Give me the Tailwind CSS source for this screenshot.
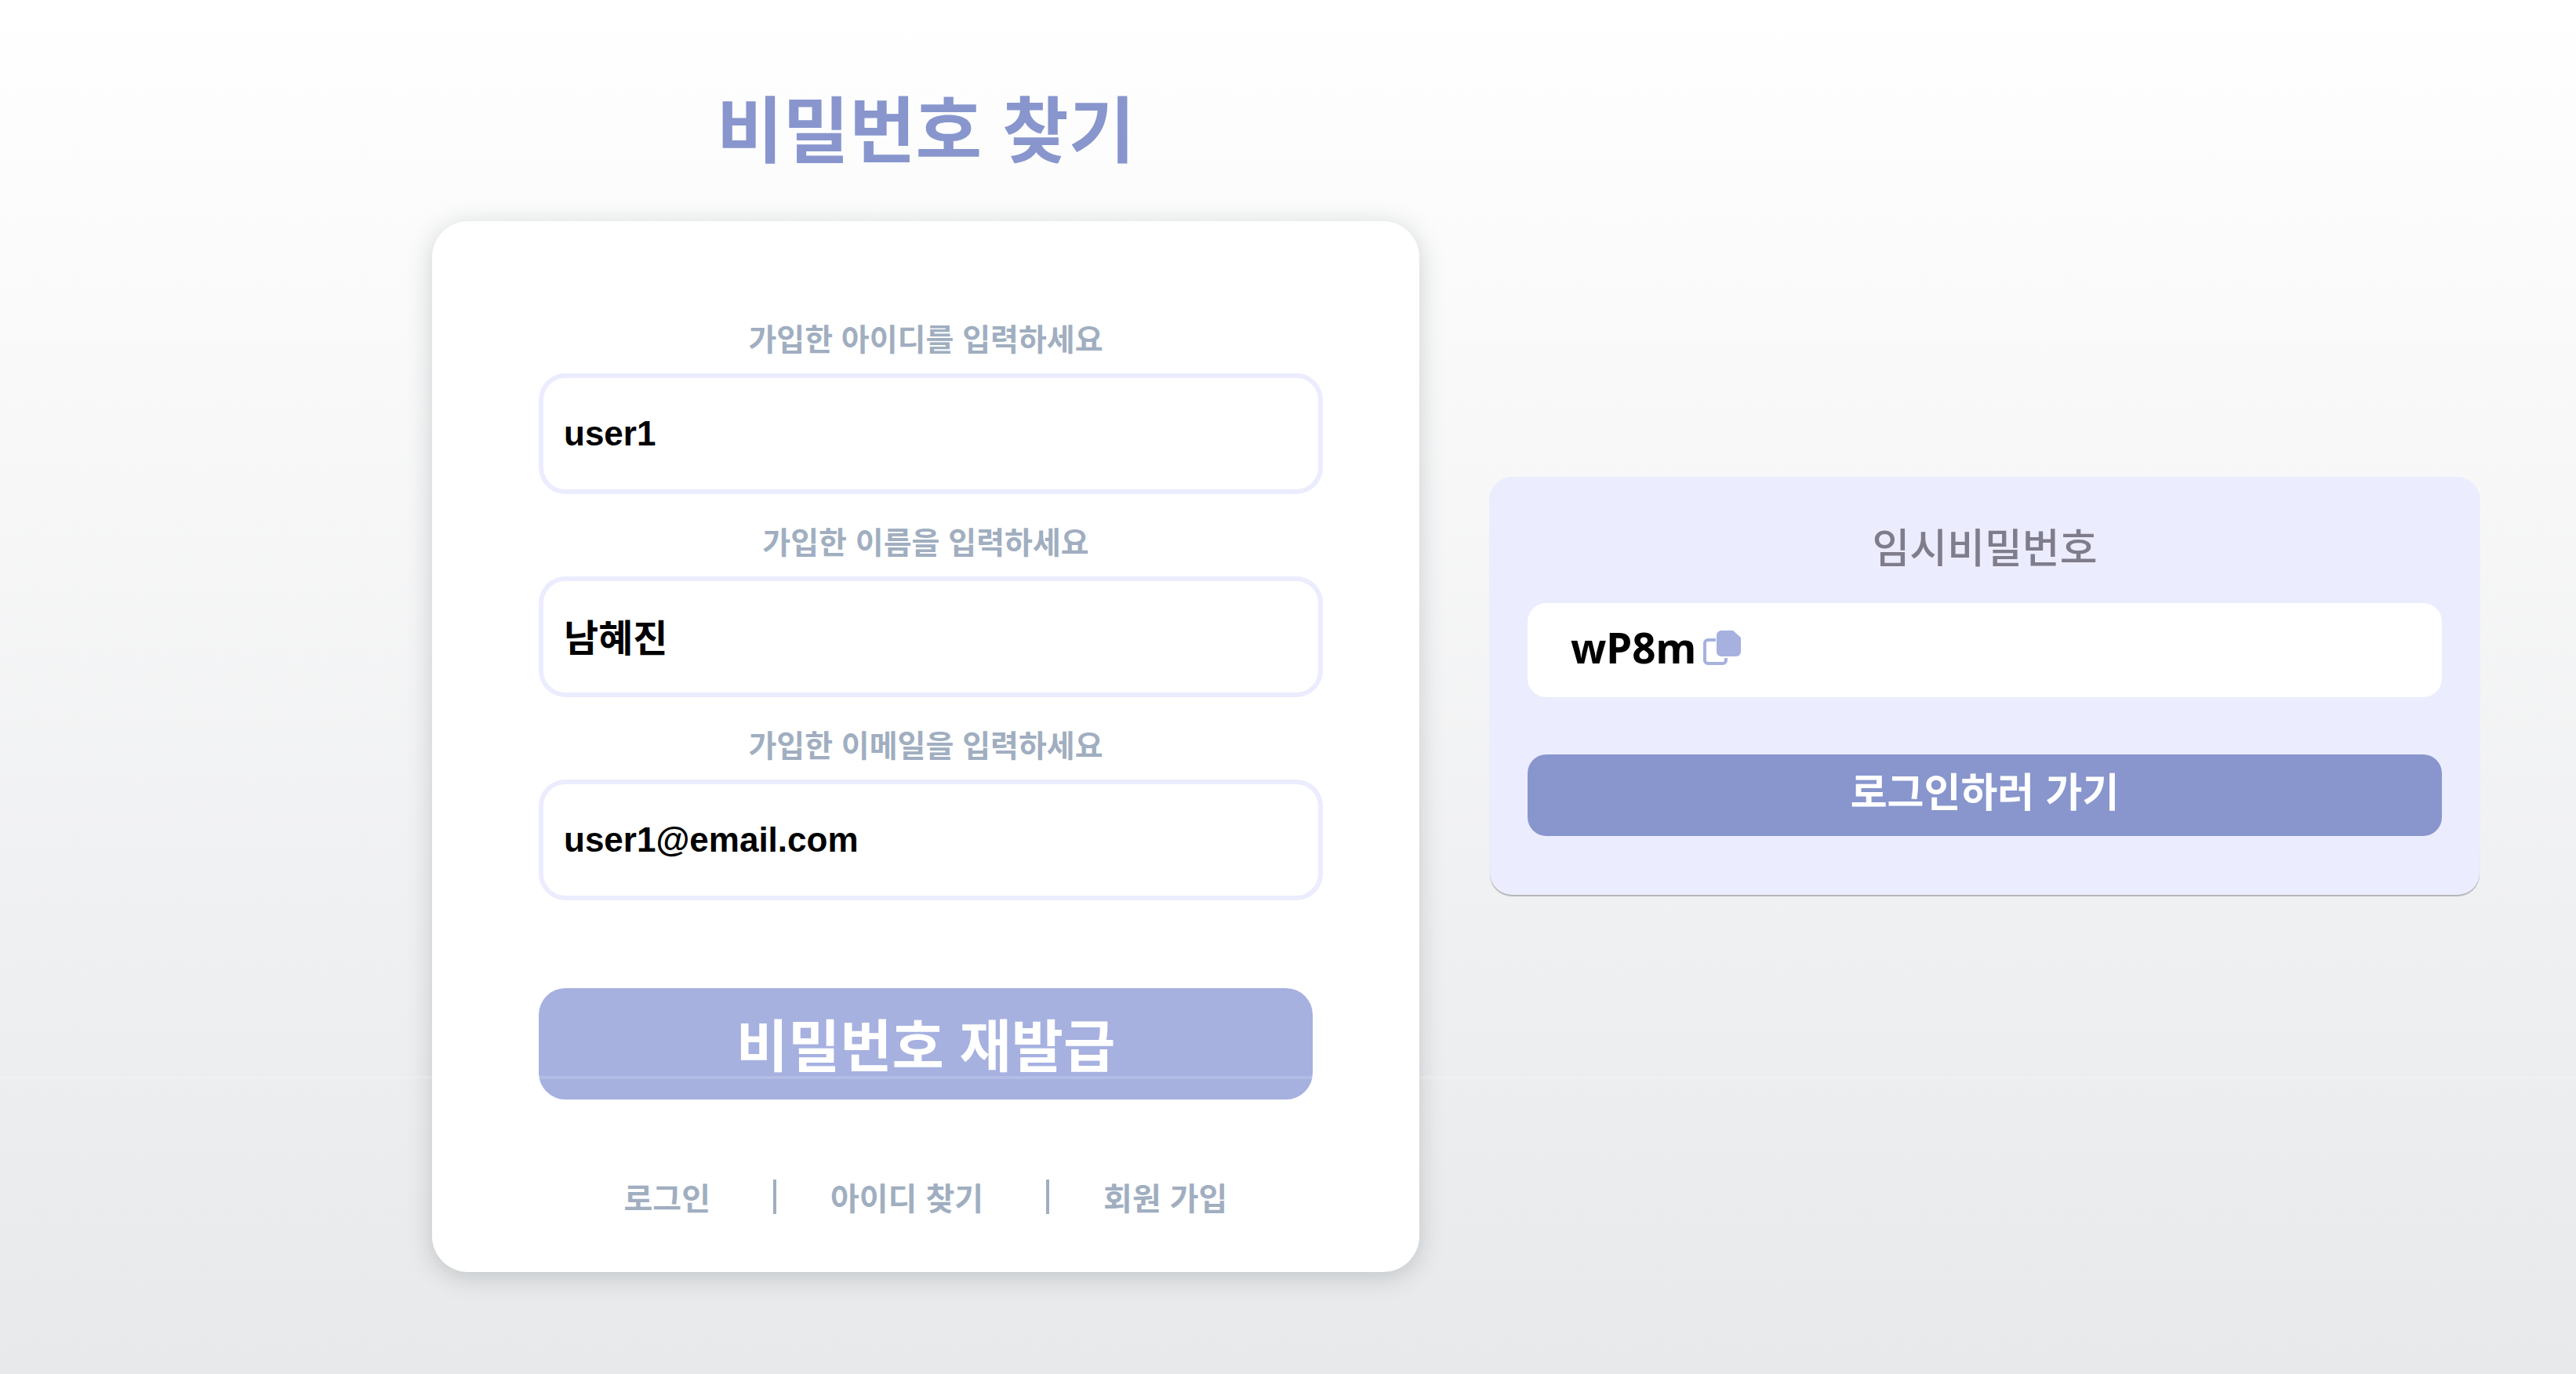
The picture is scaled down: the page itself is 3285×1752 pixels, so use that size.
<!DOCTYPE html>
<html lang="ko">
<head>
<meta charset="utf-8">
<meta name="viewport" content="width=device-width, initial-scale=1">
<title>비밀번호 찾기</title>
<script src="https://cdn.jsdelivr.net/npm/@tailwindcss/browser@4"></script>
</head>
<body class="relative min-h-screen bg-linear-to-b from-white to-[#e8e9eb] font-['Liberation_Sans','Noto_Sans_CJK_KR',sans-serif]">
<main class="grid min-h-screen grid-cols-[551fr_1259fr_90fr_1262fr_123fr]">
  <section class="col-start-2 pt-[108px] pb-[132px]">
    <h1 class="text-center font-['Noto_Sans_CJK_KR',sans-serif] text-[92px] leading-[104px] font-bold text-[#8896cd]">비밀번호 찾기</h1>
    <div class="mt-[70px] rounded-[46px] bg-white px-[136px] pt-[128px] pb-[68px] shadow-[0_6px_32px_rgba(40,60,60,0.22)]">
      <form class="flex flex-col" onsubmit="return false">
        <label for="uid" class="text-center text-[39px] leading-[48px] font-bold text-[#a0aec0]">가입한 아이디를 입력하세요</label>
        <input id="uid" type="text" value="user1" class="mt-[18px] -mr-[13px] h-[154px] rounded-[34px] border-[6px] border-[#ececff] px-[26px] text-[44px] font-bold text-black outline-none">
        <label for="uname" class="mt-[39px] text-center text-[39px] leading-[48px] font-bold text-[#a0aec0]">가입한 이름을 입력하세요</label>
        <input id="uname" type="text" value="남혜진" class="mt-[18px] -mr-[13px] h-[154px] rounded-[34px] border-[6px] border-[#ececff] px-[26px] pb-[4px] text-[48px] font-bold text-black outline-none">
        <label for="email" class="mt-[39px] text-center text-[39px] leading-[48px] font-bold text-[#a0aec0]">가입한 이메일을 입력하세요</label>
        <input id="email" type="text" value="user1@email.com" class="mt-[18px] -mr-[13px] h-[154px] rounded-[34px] border-[6px] border-[#ececff] px-[26px] text-[44px] font-bold text-black outline-none">
        <button type="submit" class="mt-[112px] h-[142px] rounded-[34px] bg-[#a6b1e0] pt-[8px] text-[72px] leading-[80px] font-bold text-white">비밀번호 재발급</button>
      </form>
      <nav class="mt-[102px] flex items-center justify-center text-[40px] leading-[48px] font-bold text-[#a0aec0]">
        <a href="#login">로그인</a>
        <span class="mr-[69px] ml-[80px] mb-[6px] h-[44px] w-[4px] bg-[#a0aec0]"></span>
        <a href="#find-id">아이디 찾기</a>
        <span class="mr-[69px] ml-[80px] mb-[6px] h-[44px] w-[4px] bg-[#a0aec0]"></span>
        <a href="#join">회원 가입</a>
      </nav>
    </div>
  </section>
  <section class="col-start-4 mt-[608px] self-start rounded-[28px] bg-[#ececff] px-[48px] pt-[52px] pb-[75px] shadow-[0_2px_1px_rgba(0,0,0,0.25)]">
    <h2 class="text-center font-['Noto_Sans_CJK_KR',sans-serif] text-[52px] leading-[72px] font-medium text-[#7f7d8c]">임시비밀번호</h2>
    <div class="mt-[37px] flex h-[120px] items-center gap-[8px] rounded-[24px] bg-white px-[55px] pb-[6px] font-['Noto_Sans',sans-serif] text-[53px] font-bold text-black">
      <span>wP8m</span>
      <button type="button" aria-label="복사">
        <svg class="h-[46px] w-[50px]" viewBox="0 0 50 46" fill="none">
          <path d="M17 13H7a4 4 0 0 0-4 4v22a4 4 0 0 0 4 4h19a4 4 0 0 0 4-4v-3" stroke="#a6b1e0" stroke-width="4"/>
          <path d="M24 1h15l10 9v18a6 6 0 0 1-6 6H24a6 6 0 0 1-6-6V7a6 6 0 0 1 6-6z" fill="#a6b1e0"/>
        </svg>
      </button>
    </div>
    <button type="button" class="mt-[73px] h-[104px] w-full rounded-[24px] bg-[#8896cd] pb-[4px] text-[51px] leading-[72px] font-bold text-white">로그인하러 가기</button>
  </section>
</main>
<!-- faint light band across the page -->
<div class="pointer-events-none absolute inset-x-0 top-[1372px] h-[4px] bg-white/15"></div>
</body>
</html>
